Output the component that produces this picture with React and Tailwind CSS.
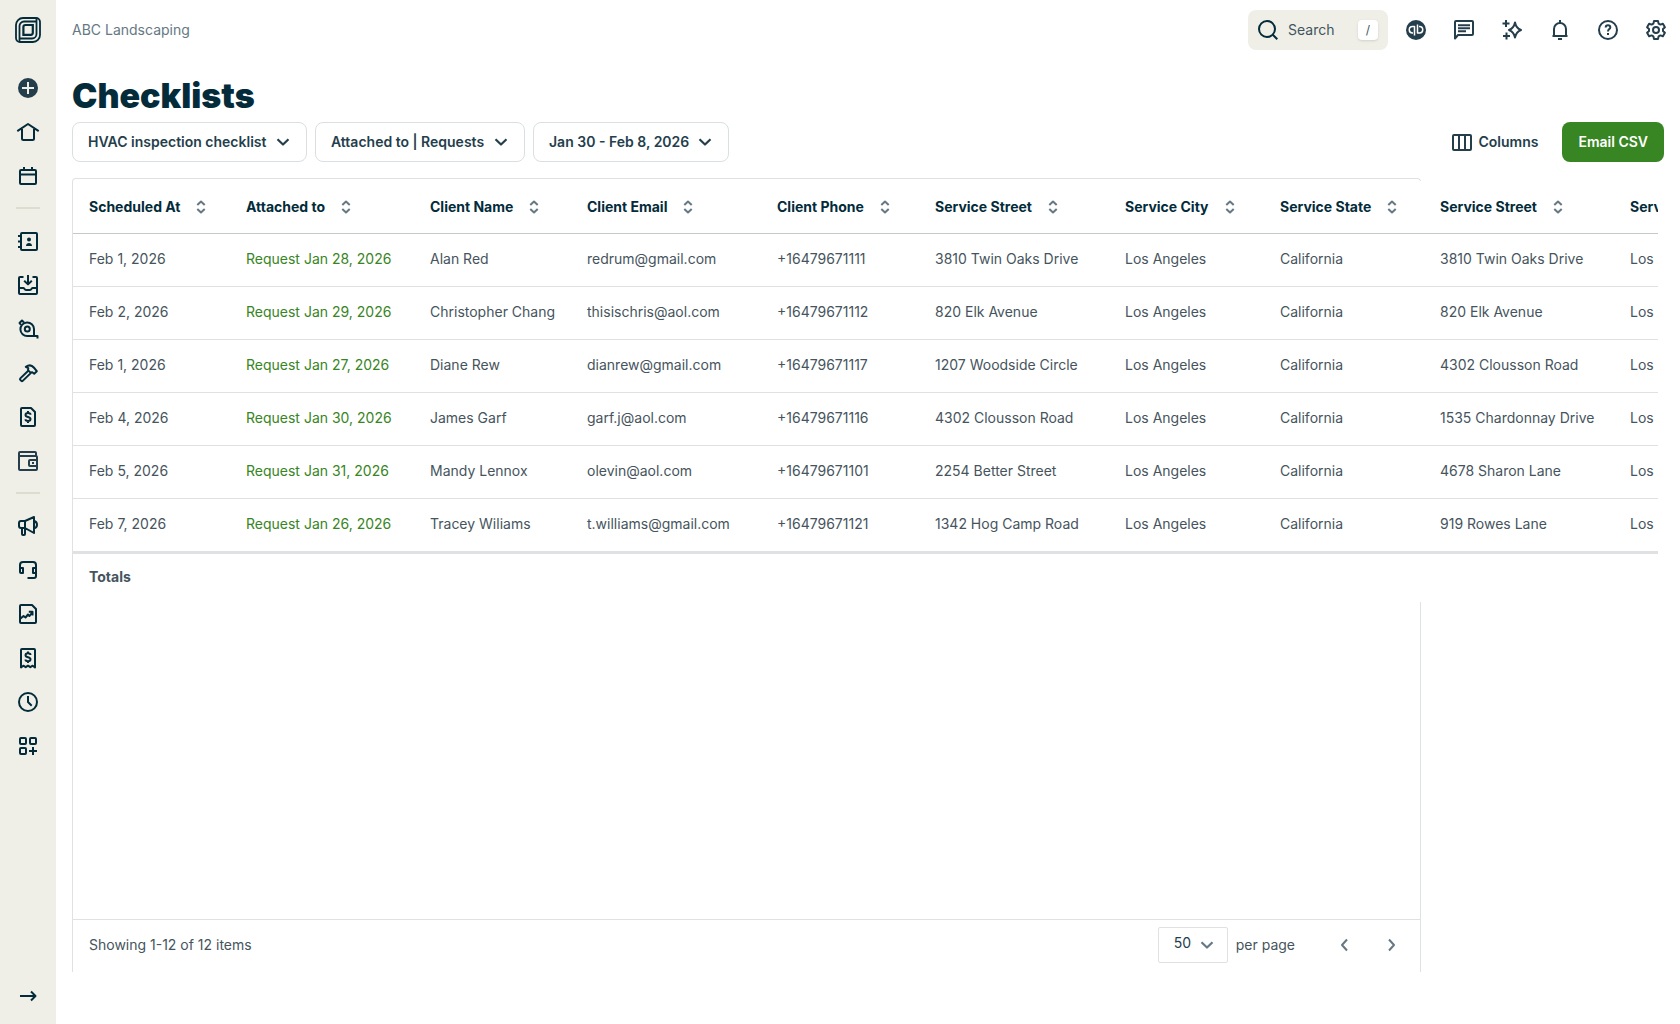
import React, { useState } from 'react';

const columns = [
  { label: 'Scheduled At', width: 'w-[157px]' },
  { label: 'Attached to', width: 'w-[184px]' },
  { label: 'Client Name', width: 'w-[157px]' },
  { label: 'Client Email', width: 'w-[190px]' },
  { label: 'Client Phone', width: 'w-[158px]' },
  { label: 'Service Street', width: 'w-[190px]' },
  { label: 'Service City', width: 'w-[155px]' },
  { label: 'Service State', width: 'w-[160px]' },
  { label: 'Service Street', width: 'w-[190px]' },
  { label: 'Service City', width: 'w-[155px]' },
];

const rows = [
  ['Feb 1, 2026', 'Request Jan 28, 2026', 'Alan Red', 'redrum@gmail.com', '+16479671111', '3810 Twin Oaks Drive', 'Los Angeles', 'California', '3810 Twin Oaks Drive', 'Los Angeles'],
  ['Feb 2, 2026', 'Request Jan 29, 2026', 'Christopher Chang', 'thisischris@aol.com', '+16479671112', '820 Elk Avenue', 'Los Angeles', 'California', '820 Elk Avenue', 'Los Angeles'],
  ['Feb 1, 2026', 'Request Jan 27, 2026', 'Diane Rew', 'dianrew@gmail.com', '+16479671117', '1207 Woodside Circle', 'Los Angeles', 'California', '4302 Clousson Road', 'Los Angeles'],
  ['Feb 4, 2026', 'Request Jan 30, 2026', 'James Garf', 'garf.j@aol.com', '+16479671116', '4302 Clousson Road', 'Los Angeles', 'California', '1535 Chardonnay Drive', 'Los Angeles'],
  ['Feb 5, 2026', 'Request Jan 31, 2026', 'Mandy Lennox', 'olevin@aol.com', '+16479671101', '2254 Better Street', 'Los Angeles', 'California', '4678 Sharon Lane', 'Los Angeles'],
  ['Feb 7, 2026', 'Request Jan 26, 2026', 'Tracey Wiliams', 't.williams@gmail.com', '+16479671121', '1342 Hog Camp Road', 'Los Angeles', 'California', '919 Rowes Lane', 'Los Angeles'],
];

const DOLLAR = 'M14.5 9.7C14.5 8.5 13.4 8 12 8s-2.5.7-2.5 1.9c0 2.9 5 1.3 5 4.1 0 1.3-1.1 2-2.5 2s-2.5-.6-2.5-1.7M12 6v2M12 16v2';

const icons = {
  create: (
    <>
      <circle cx="12" cy="12" r="10" fill="#243e4c" stroke="none" />
      <path d="M12 6v12M6 12h12" stroke="#f0efe7" />
    </>
  ),
  home: <path d="M1.3 11.2 12 4l10.700 7.200M6 9v9.500A1.500 1.500 0 0 0 7.500 20h9a1.500 1.500 0 0 0 1.500-1.500V9" />,
  calendar: <path d="M5 6h14a1 1 0 0 1 1 1v12a1 1 0 0 1-1 1H5a1 1 0 0 1-1-1V7a1 1 0 0 1 1-1ZM4 10.500h16M8 3v3M16 3v3" />,
  clients: (
    <>
      <path d="M6 4h14a1 1 0 0 1 1 1v15a1 1 0 0 1-1 1H6a1 1 0 0 1-1-1V5a1 1 0 0 1 1-1ZM2 7h3M2 12.500h3M2 18h3" />
      <circle cx="13" cy="10.500" r="2" fill="currentColor" stroke="none" />
      <path d="M10 17c0-2 1.300-3 3-3s3 1 3 3Z" fill="currentColor" stroke="none" />
    </>
  ),
  requests: <path d="M7.500 4H4a1 1 0 0 0-1 1v15a1 1 0 0 0 1 1h16a1 1 0 0 0 1-1V5a1 1 0 0 0-1-1h-3.500M3 15h4.500c.8 0 1 2 2.500 2h4c1.500 0 1.700-2 2.500-2H21M12 2v9M8.200 7.700 12 11.400l3.800-3.700" />,
  quotes: (
    <>
      <path d="M21.500 21.500V19H11.500A6.800 6.800 0 1 1 18 12v7" />
      <circle cx="11.300" cy="12" r="2.500" />
      <path d="m5 8-1.500-2L6 3.500 8 5.500" />
    </>
  ),
  jobs: <path d="M12.500 9.500 4.300 17.400a1 1 0 0 0 0 1.400l1 1.100a1 1 0 0 0 1.400 0l8.300-8M9.800 5.800c3-2 6.200-1.500 8 .7l3 3.700-2.600 2.600-1.900-1.500-1.800.3-2.500-2.500.3-1.900Z" />,
  invoices: (
    <>
      <path d="M15 3H6a1 1 0 0 0-1 1v16a1 1 0 0 0 1 1h12a1 1 0 0 0 1-1V7Z" />
      <path d={DOLLAR} />
    </>
  ),
  wallet: (
    <g stroke="#243e4c">
      <path d="M20 7V4a1 1 0 0 0-1-1H4a1 1 0 0 0-1 1v16a1 1 0 0 0 1 1h16a1 1 0 0 0 1-1V8a1 1 0 0 0-1-1H3M21 11h-7a1 1 0 0 0-1 1v4a1 1 0 0 0 1 1h7" />
      <path d="M16 14h2" />
    </g>
  ),
  marketing: <path d="M9 7H5a2 2 0 0 0-2 2v3a2 2 0 0 0 2 2h4l9 5V3L9 7ZM9 7v7M6 14v6a1 1 0 0 0 1 1h1a1 1 0 0 0 1-1v-6M18 7c4 .8 4 6.500 0 7.300" />,
  receptionist: <path d="M4 14V7a3 3 0 0 1 3-3h10a3 3 0 0 1 3 3v11a2 2 0 0 1-2 2h-6.500M4 10h3v5H5a1 1 0 0 1-1-1ZM20 10h-3v5h3" />,
  reports: (
    <>
      <path d="M16 3H5a1 1 0 0 0-1 1v16a1 1 0 0 0 1 1h14a1 1 0 0 0 1-1V7Z" />
      <path d="m4.500 16.500 3-2.500 2 1.500L12 12.500l1.500 1.500 3-4M12.800 9.700H16.500V13.500" />
    </>
  ),
  expenses: (
    <>
      <path d="M5 21.500V4a1 1 0 0 1 1-1h12a1 1 0 0 1 1 1v17.500l-2.300-1.800-2.400 1.500-2.300-1.500-2.300 1.500-2.400-1.500Z" />
      <path d="M14.500 9C14.500 7.800 13.400 7.300 12 7.300s-2.500.7-2.500 1.900c0 2.900 5 1.300 5 4.100 0 1.300-1.100 2-2.500 2s-2.500-.6-2.500-1.700M12 5.500v2M12 15v2" />
    </>
  ),
  timesheets: (
    <>
      <circle cx="12" cy="12" r="9" />
      <path d="M12 6v6l3.700 3.700" />
    </>
  ),
  apps: (
    <>
      <rect x="4" y="4" width="6" height="6" rx="1" />
      <rect x="14" y="4" width="6" height="6" rx="1" />
      <rect x="4" y="14" width="6" height="6" rx="1" />
      <path d="M17 13v8M13 17h8" />
    </>
  ),
  expand: <path d="M4 12h15M15 7.500 19.500 12 15 16.500" />,
  search: (
    <>
      <circle cx="11" cy="11" r="8" />
      <path d="m16.800 16.800 4.500 4.500" />
    </>
  ),
  quickbooks: (
    <>
      <circle cx="12" cy="12" r="10" fill="currentColor" stroke="none" />
      <path d="M10.500 17.500V8.500H8.500a3 3 0 0 0 0 6.500h.5M13.500 6.500v8.500h2a3 3 0 0 0 0-6.500H15" stroke="#fff" strokeWidth="1.500" />
    </>
  ),
  chat: <path d="M3 20.500V4a1 1 0 0 1 1-1h16a1 1 0 0 1 1 1v12a1 1 0 0 1-1 1H6ZM6 7.300h12M6 10.300h12M6 13.300h8" strokeWidth="2" />,
  sparkles: <path d="M15 4.500c.8 4 2.300 6 6 7.500-3.700 1.500-5.200 3.500-6 7.500-.8-4-2.300-6-6-7.500 3.700-1.500 5.200-3.500 6-7.500ZM6 2v7M2.500 5.500h7M6.500 14.500v7M3 18h7" />,
  bell: <path d="M4.500 18h15M6 18v-7a6 6 0 0 1 12 0v7M12 2v3M10 21h4" />,
  help: (
    <>
      <circle cx="12" cy="12" r="9" />
      <path d="M9.700 9.500c0-1.300 1-2.200 2.300-2.200s2.300.9 2.300 2.100c0 1.600-2.300 1.900-2.300 4M12 15v2" />
    </>
  ),
  settings: (
    <>
      <path d="M10 3h4l.6 2.600 1.800 1 2.500-.8 2 3.400-1.900 1.800v2l1.900 1.800-2 3.400-2.500-.8-1.800 1L14 21h-4l-.6-2.600-1.800-1-2.500.8-2-3.400L5 13v-2L3.100 9.200l2-3.400 2.500.8 1.800-1Z" />
      <circle cx="12" cy="12" r="3" />
    </>
  ),
  columns: <path d="M4 5h16a1 1 0 0 1 1 1v13a1 1 0 0 1-1 1H4a1 1 0 0 1-1-1V6a1 1 0 0 1 1-1ZM9 5v15M15 5v15" />,
  chevronDown: <path d="m6.500 9.300 5.500 5.200 5.500-5.200" strokeWidth="2.200" />,
  chevronLeft: <path d="m15 6.500-5 5.500 5 5.500" />,
  chevronRight: <path d="m9 6.500 5 5.500-5 5.500" />,
  sort: <path d="m8.300 10 3.700-3.500L15.700 10M8.300 14l3.700 3.500 3.700-3.500" />,
};

const nav = [
  ['create', 'home', 'calendar'],
  ['clients', 'requests', 'quotes', 'jobs', 'invoices', 'wallet'],
  ['marketing', 'receptionist', 'reports', 'expenses', 'timesheets', 'apps'],
];

const topActions = ['quickbooks', 'chat', 'sparkles', 'bell', 'help', 'settings'];

function Icon({ name }) {
  return (
    <svg viewBox="0 0 24 24" fill="none" stroke="currentColor" strokeWidth="2" strokeLinejoin="round" className="size-6 shrink-0" aria-hidden="true">
      {icons[name]}
    </svg>
  );
}

function Logo() {
  return (
    <svg viewBox="0 0 26 26" fill="none" stroke="currentColor" strokeWidth="1.800" className="size-[26px]" aria-hidden="true">
      <path d="M8 1h13a4 4 0 0 1 4 4v13a7 7 0 0 1-7 7H5a4 4 0 0 1-4-4V8a7 7 0 0 1 7-7Z" />
      <path d="M4.500 24V9A4.500 4.500 0 0 1 9 4.500h12.500M21.500 2v15a4.500 4.500 0 0 1-4.500 4.500H4.500" />
      <path d="M8.400 17.800V10a2 2 0 0 1 2-2h7.400v7.800a2 2 0 0 1-2 2Z" strokeWidth="2.200" />
    </svg>
  );
}

function Sidebar() {
  return (
    <nav className="flex w-14 shrink-0 flex-col items-center bg-[#f0efe7] pt-[17px] pb-4">
      <a href="#home" aria-label="Jobber" className="mb-[33px]"><Logo /></a>
      {nav.map((group, i) => (
        <React.Fragment key={i}>
          {i > 0 && <hr className="mt-[19px] mb-5 w-6 border-t-2 border-[#dddcd0]" />}
          <ul className="flex flex-col gap-5">
            {group.map((name) => (
              <li key={name}><a href={`#${name}`} aria-label={name} className="block"><Icon name={name} /></a></li>
            ))}
          </ul>
        </React.Fragment>
      ))}
      <button aria-label="expand" className="mt-auto"><Icon name="expand" /></button>
    </nav>
  );
}

function TopBar() {
  return (
    <header className="flex h-[60px] items-center justify-between pr-3 pl-4">
      <span className="text-sm text-[#657884]">ABC Landscaping</span>
      <div className="flex items-center gap-4 text-[#243e4c]">
        <label className="flex h-10 w-[140px] items-center gap-2 rounded-lg bg-[#f0efe7] pr-2.5 pl-2">
          <span className="text-[#032b3a]"><Icon name="search" /></span>
          <input type="text" aria-label="Search" placeholder="Search" className="w-0 flex-1 text-sm outline-none placeholder:text-[#3f5560]" />
          <kbd className="flex size-5 items-center justify-center rounded bg-white font-[Inter] text-xs text-[#3f5560] shadow-sm">/</kbd>
        </label>
        <div className="flex gap-6">
          {topActions.map((name) => (
            <button key={name} aria-label={name}><Icon name={name} /></button>
          ))}
        </div>
      </div>
    </header>
  );
}

function FilterSelect({ label, value }) {
  return (
    <div className="relative flex items-center">
      <select aria-label={label} className="h-10 appearance-none rounded-lg border border-[#dadfe1] bg-white pr-[39px] pl-[15px] text-sm font-semibold">
        <option>{value}</option>
      </select>
      <span className="pointer-events-none absolute right-3"><Icon name="chevronDown" /></span>
    </div>
  );
}

function Toolbar() {
  return (
    <div className="flex items-center gap-2 text-[#243e4c]">
      <FilterSelect label="Checklist" value="HVAC inspection checklist" />
      <FilterSelect label="Attached to" value="Attached to | Requests" />
      <button className="flex h-10 items-center gap-1 rounded-lg border border-[#dadfe1] bg-white pr-[11px] pl-[15px] text-sm font-semibold">
        Jan 30 - Feb 8, 2026
        <Icon name="chevronDown" />
      </button>
      <button className="ml-auto flex h-10 items-center gap-1 px-4 text-sm font-semibold">
        <Icon name="columns" />
        Columns
      </button>
      <button className="h-10 rounded-lg bg-[#388523] px-4 text-sm font-semibold text-white">Email CSV</button>
    </div>
  );
}

function ReportTable() {
  return (
    <table className="w-max table-fixed border-separate border-spacing-0 text-left text-sm">
      <thead className="text-[#032b3a]">
        <tr>
          {columns.map((col, i) => (
            <th key={i} className={`${col.width} h-[53px] border-b border-[#c4c9cb] pl-4 font-bold`}>
              <button className="flex items-center gap-[9px] whitespace-nowrap">
                {col.label}
                <span className="text-[#657884]"><Icon name="sort" /></span>
              </button>
            </th>
          ))}
        </tr>
      </thead>
      <tbody className="text-[#46545d]">
        {rows.map((row, i) => (
          <tr key={i}>
            {row.map((cell, j) => (
              <td key={j} className={`${i === rows.length - 1 ? 'h-[55px] border-b-3' : 'h-[53px] border-b'} border-[#dfe1e2] pb-0.5 pl-4 whitespace-nowrap`}>
                {j === 1 ? <a href="#request" className="text-[#388523]">{cell}</a> : cell}
              </td>
            ))}
          </tr>
        ))}
      </tbody>
      <tfoot className="text-[#46545d]">
        <tr>
          <th colSpan={columns.length} className="h-12 pb-0.5 pl-4 font-bold">Totals</th>
        </tr>
      </tfoot>
    </table>
  );
}

function Pagination() {
  const [perPage, setPerPage] = useState('50');
  return (
    <div className="flex h-[53px] items-center border-t border-[#dfe1e2] px-4 pb-0.5 text-sm text-[#46545d]">
      <span>Showing 1-12 of 12 items</span>
      <div className="relative ml-auto flex items-center">
        <select id="per-page" value={perPage} onChange={(e) => setPerPage(e.target.value)} className="h-9 w-[70px] appearance-none rounded-xs border border-[#dfe1e2] bg-white pb-1 pl-[15px] text-[#243e4c]">
          <option>25</option>
          <option>50</option>
          <option>100</option>
        </select>
        <span className="pointer-events-none absolute right-[9px] text-[#657884]"><Icon name="chevronDown" /></span>
      </div>
      <label htmlFor="per-page" className="ml-2">per page</label>
      <div className="ml-[37px] flex gap-6 text-[#657884]">
        <button aria-label="Previous page"><Icon name="chevronLeft" /></button>
        <button aria-label="Next page"><Icon name="chevronRight" /></button>
      </div>
    </div>
  );
}

export default function App() {
  return (
    <div className="flex min-h-screen bg-white font-[Inter,sans-serif] text-[#032b3a]">
      <Sidebar />
      <div className="flex min-w-0 flex-1 flex-col">
        <TopBar />
        <main className="flex flex-1 flex-col px-4 pt-4 pb-[52px]">
          <h1 className="mb-1.5 text-[34px] leading-10 font-black">Checklists</h1>
          <Toolbar />
          {/* the table is wider than the card frame, so both share one grid row */}
          <div className="mt-4 -mr-2.5 grid flex-1 grid-cols-[minmax(0,1fr)_253px]">
            <section className="col-start-1 row-start-1 flex flex-col justify-end rounded-t-sm border border-b-0 border-[#dfe1e2]">
              <Pagination />
            </section>
            <div className="col-span-2 col-start-1 row-start-1 mt-[3px] mr-4 ml-px self-start overflow-hidden bg-white">
              <ReportTable />
            </div>
          </div>
        </main>
      </div>
    </div>
  );
}
